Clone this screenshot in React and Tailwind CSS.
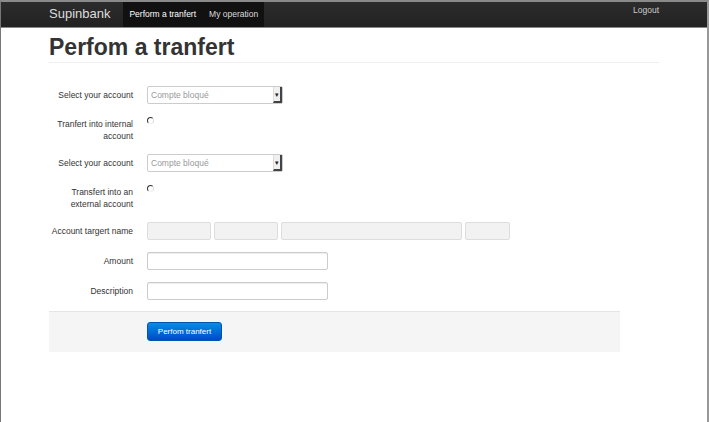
import React from "react";

const Select = () => (
  <div className="flex h-[18px] w-[136px] items-stretch rounded-[2px] border border-[#ccc] bg-white">
    <span className="flex flex-1 items-center pl-[3px] text-[8.5px] text-[#999]">Compte bloqué</span>
    <span className="flex w-[9px] items-center justify-center border-b-2 border-r-2 border-l border-l-[#ddd] border-b-[#444] border-r-[#444] bg-[#f0f0f0] text-[7px] leading-none text-[#222]">
      ▾
    </span>
  </div>
);

const Radio = () => (
  <span className="mt-[1px] block h-[7px] w-[7px] rounded-full border-[1.5px] border-t-[#333] border-l-[#333] border-r-[#ddd] border-b-[#eee] bg-white" />
);

const Row = ({ label, children, two }) => (
  <div className="mb-3 flex">
    <label className={"w-[84px] shrink-0 text-right text-[8.5px] text-[#333] " + (two ? "pt-[2px] leading-[12px]" : "pt-[4px] leading-[11px]")}>
      {label}
    </label>
    <div className="ml-[14px] flex gap-[3px]">{children}</div>
  </div>
);

const Input = ({ w }) => (
  <div
    className="h-[18px] rounded-[2px] border border-[#ccc] bg-white shadow-[inset_0_1px_1px_rgba(0,0,0,0.075)]"
    style={{ width: w }}
  />
);

const Disabled = ({ w }) => (
  <div className="h-[18px] rounded-[2px] border border-[#ddd] bg-[#f2f2f2]" style={{ width: w }} />
);

export default function App() {
  return (
    <div className="h-[422px] overflow-hidden border-t-2 border-l border-r-2 border-t-[#8a8a8a] border-l-[#777] border-r-[#999] bg-white font-['Liberation_Sans',Arial,sans-serif]">
      {/* navbar */}
      <div className="h-[26px] border-b border-[#888] bg-gradient-to-b from-[#2c2c2c] to-[#222]">
        <div className="mx-auto flex h-full w-[610px]">
          <span className="mt-[4px] text-[13px] leading-[16px] text-[#ddd]">Supinbank</span>
          <nav className="ml-[13px] flex h-full bg-[#111]">
            <span className="flex items-center px-[6px] text-[8.5px] text-white">Perform a tranfert</span>
            <span className="flex items-center pl-[7px] pr-[6px] text-[8.5px] text-[#ddd]">My operation</span>
          </nav>
          <span className="ml-auto mt-[3px] text-[8.5px] leading-[11px] text-[#ccc]">Logout</span>
        </div>
      </div>

      <div className="mx-auto w-[610px]">
        <h1 className="mt-[8px] border-b border-[#eee] pb-[4px] text-[23px] font-bold leading-[22px] text-[#333]">
          Perfom a tranfert
        </h1>

        <form className="mt-[23px]">
          <Row label="Select your account">
            <Select />
          </Row>
          <Row label={<>Tranfert into internal<br />account</>} two>
            <Radio />
          </Row>
          <Row label="Select your account">
            <Select />
          </Row>
          <Row label={<>Transfert into an<br />external account</>} two>
            <Radio />
          </Row>
          <Row label="Account targert name">
            <Disabled w={64} />
            <Disabled w={64} />
            <Disabled w={181} />
            <Disabled w={45} />
          </Row>
          <Row label="Amount">
            <Input w={181} />
          </Row>
          <Row label="Description">
            <Input w={181} />
          </Row>

          <div className="-mt-px w-[571px] border-t border-[#e5e5e5] bg-[#f5f5f5] pb-[11px] pl-[98px] pt-[10px]">
            <button
              type="button"
              className="block h-[19px] w-[75px] rounded-[3px] border border-[#0055aa] bg-gradient-to-b from-[#0a8ee0] to-[#0048cc] text-[8px] text-white"
            >
              Perfom tranfert
            </button>
          </div>
        </form>
      </div>
    </div>
  );
}
